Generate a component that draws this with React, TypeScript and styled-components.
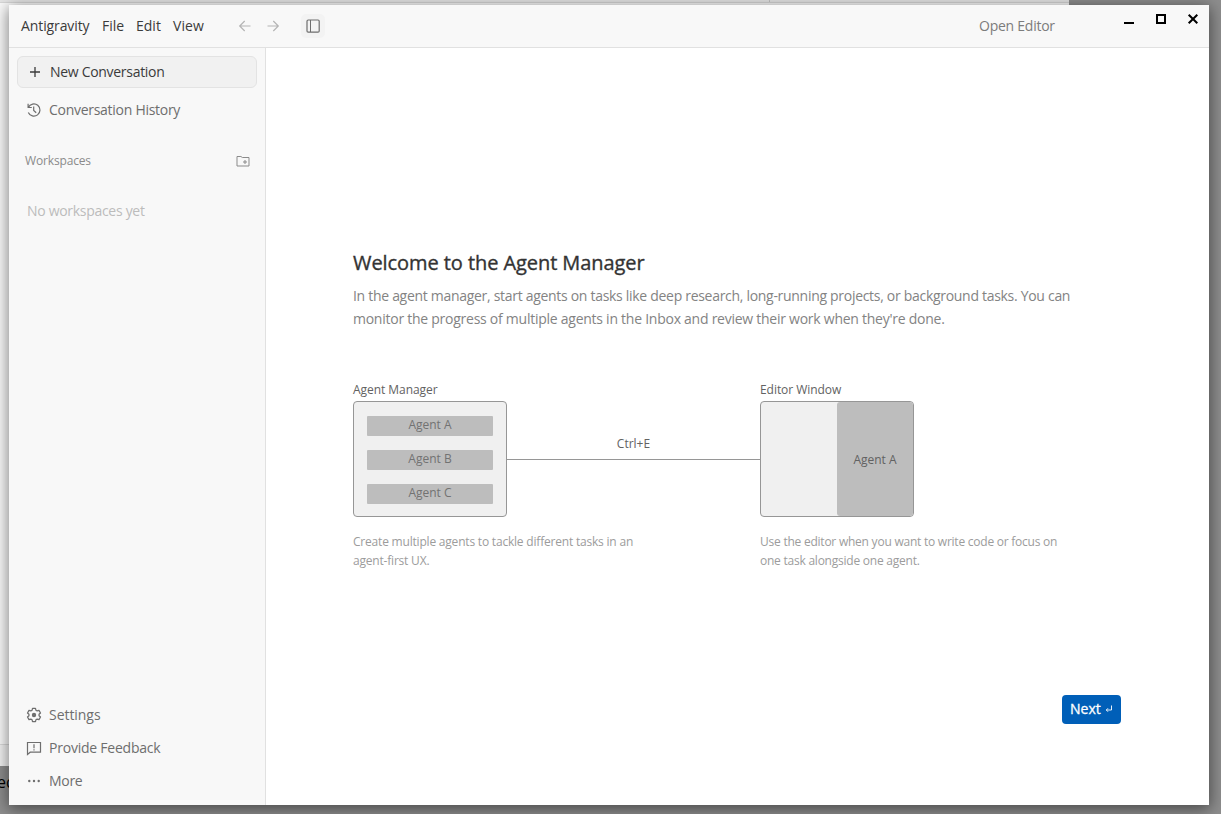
import React from "react";
import styled, { createGlobalStyle } from "styled-components";

const Global = createGlobalStyle`
  *, *::before, *::after { box-sizing: border-box; }
  body {
    margin: 0;
    overflow: hidden;
    font-family: "Open Sans", "Noto Sans", sans-serif;
    font-size: 14px;
  }
  button { font: inherit; letter-spacing: inherit; border: 0; padding: 0; background: none; color: inherit; }
`;

const Desktop = styled.div`
  position: relative;
  width: 1221px;
  height: 814px;
  overflow: hidden;
  background: #8e8e8e;
`;

const BackWindow = styled.div`
  width: 1069px;
  height: 766px;
  display: flex;
  flex-direction: column;
  background: #fbfbfb;
`;

const BackBar = styled.div`
  height: 3px;
  display: flex;
  background: #e6e6e6;
  border-bottom: 1px solid #d8d8d8;
`;

const BackTab = styled.div`
  width: 770px;
  border-right: 1px solid #c4c4c4;
`;

const BackBody = styled.div`
  flex: 1;
`;

const BackFooter = styled.div`
  height: 22px;
  border-top: 1px solid #dcdcdc;
  background: #f3f3f3;
`;

const BackText = styled.div`
  margin-top: 5px;
  margin-left: -3px;
  font: 16px/22px "Open Sans", sans-serif;
  color: #000;
`;

const AppWindow = styled.div`
  position: absolute;
  left: 9px;
  top: 5px;
  width: 1200px;
  height: 800px;
  display: flex;
  flex-direction: column;
  background: #fff;
  box-shadow: 0 3px 15px 1px rgba(0, 0, 0, 0.5);
`;

const TitleBar = styled.header`
  height: 43px;
  flex: none;
  display: flex;
  align-items: center;
  padding-left: 12px;
  background: #f8f8f8;
  border-bottom: 1px solid #e1e1e1;
`;

const Menu = styled.nav`
  display: flex;
  gap: 12px;
  padding-bottom: 2px;
  color: #3b3b3b;
`;

const MenuItem = styled.button<{ $w: number; $ls: number }>`
  width: ${(p) => p.$w}px;
  text-align: left;
  white-space: nowrap;
  letter-spacing: ${(p) => p.$ls}px;
`;

const NavButtons = styled.div`
  display: flex;
  align-items: center;
  gap: 12px;
  margin-left: 31.5px;
  color: #b4b4b4;
`;

const IconButton = styled.button<{ $size?: number; $bg?: string }>`
  width: ${(p) => p.$size ?? 16}px;
  height: ${(p) => p.$size ?? 16}px;
  display: flex;
  align-items: center;
  justify-content: center;
  border-radius: 5px;
  background: ${(p) => p.$bg ?? "transparent"};
`;

const PanelToggle = styled.div`
  margin-left: 20px;
  color: #6e6e6e;
`;

const OpenEditor = styled.button`
  margin-left: auto;
  padding-bottom: 2px;
  width: 77px;
  text-align: left;
  white-space: nowrap;
  color: #7c7c7c;
  letter-spacing: -0.25px;
`;

const WindowControls = styled.div`
  align-self: flex-start;
  display: flex;
  gap: 16px;
  margin: 6px 8px 0 65px;
  color: #000;
`;

const Body = styled.div`
  flex: 1;
  display: flex;
  min-height: 0;
`;

const Sidebar = styled.aside`
  width: 257px;
  flex: none;
  display: flex;
  flex-direction: column;
  padding: 8px;
  background: #f8f8f8;
  border-right: 1px solid #e1e1e1;
`;

const Label = styled.span<{ $ls?: number; $lift?: number }>`
  letter-spacing: ${(p) => p.$ls ?? -0.3}px;
  padding-bottom: ${(p) => p.$lift ?? 0}px;
`;

const NewButton = styled.button`
  height: 32px;
  display: flex;
  align-items: center;
  gap: 7px;
  padding-left: 9px;
  border: 1px solid #e3e3e3;
  border-radius: 6px;
  background: #f1f1f1;
  color: #3b3b3b;
`;

const SideItem = styled.button`
  height: 33px;
  display: flex;
  align-items: center;
  gap: 7px;
  padding-left: 9px;
  color: #6e6e6e;
`;

const History = styled.div`
  margin-top: 5px;
`;

const SectionHeader = styled.div`
  display: flex;
  align-items: center;
  justify-content: space-between;
  margin-top: 26px;
  height: 18px;
  padding: 0 6px 0 8px;
  font-size: 12px;
  color: #8b8b8b;
`;

const EmptyNote = styled.div`
  margin: 31px 0 0 10px;
  line-height: 20px;
  color: #bcbcbc;
  letter-spacing: -0.3px;
`;

const SideFooter = styled.div`
  margin-top: auto;
  display: flex;
  flex-direction: column;
`;

const Main = styled.main`
  flex: 1;
  display: flex;
  flex-direction: column;
  padding: 201px 88px 81px 87px;
`;

const Heading = styled.h1`
  margin: 0;
  font-size: 20px;
  line-height: 28px;
  font-weight: 500;
  letter-spacing: -0.07px;
  color: #333;
  -webkit-text-stroke: 0.35px #333;
`;

const Intro = styled.p`
  margin: 7px 0 0;
  line-height: 23px;
  color: #838383;
  white-space: nowrap;
`;

const Diagram = styled.section`
  display: flex;
  margin-top: 51px;
`;

const Card = styled.div<{ $w: number }>`
  width: ${(p) => p.$w}px;
  flex: none;
`;

const CardLabel = styled.div`
  height: 20px;
  line-height: 18px;
  font-size: 12px;
  letter-spacing: -0.05px;
  color: #626262;
`;

const Frame = styled.div`
  width: 154px;
  height: 116px;
  display: flex;
  border: 1px solid #969696;
  border-radius: 4px;
  background: #f0f0f0;
  overflow: hidden;
`;

const AgentList = styled.div`
  flex: 1;
  display: flex;
  flex-direction: column;
  gap: 14px;
  padding: 14px 13px 12px;
`;

const Agent = styled.div`
  flex: 1;
  line-height: 18px;
  border-radius: 1px;
  background: #bdbdbd;
  color: #727272;
  font-size: 12px;
  text-align: center;
`;

const AgentPane = styled.div`
  width: 76px;
  margin-left: auto;
  display: flex;
  align-items: center;
  justify-content: center;
  background: #bdbdbd;
  color: #626262;
  font-size: 12px;
  border-radius: 3px;
`;

const Caption = styled.p<{ $ls: number }>`
  margin: 15px 0 0;
  font-size: 12px;
  line-height: 19px;
  letter-spacing: ${(p) => p.$ls}px;
  color: #9c9c9c;
  white-space: nowrap;
`;

const Connector = styled.div`
  width: 253px;
  height: 79px;
  display: flex;
  align-items: center;
  flex-direction: column;
  justify-content: flex-end;
  border-bottom: 1px solid #969696;
  padding-bottom: 6px;
  font-size: 12px;
  line-height: 18px;
  color: #626262;
`;

const NextButton = styled.button`
  margin: auto 0 0 auto;
  width: 59px;
  height: 29px;
  display: flex;
  align-items: center;
  gap: 4px;
  padding: 0 0 2px 8px;
  border-radius: 4px;
  background: #005fb8;
  color: #fff;
  -webkit-text-stroke: 0.3px #fff;
`;

const Svg = ({ children, size = 16, sw = 1 }: { children: React.ReactNode; size?: number; sw?: number }) => (
  <svg width={size} height={size} viewBox="0 0 16 16" fill="none" stroke="currentColor" strokeWidth={sw}>
    {children}
  </svg>
);

const ArrowLeft = () => <Svg sw={1.2}><path d="M13.5 8H3M7.700 3 2.700 8l5 5" /></Svg>;
const ArrowRight = () => <Svg sw={1.2}><path d="M2.500 8H13M8.300 3l5 5-5 5" /></Svg>;
const PanelIcon = () => (
  <Svg><rect x="2" y="2" width="12.200" height="12.200" rx="1.200" strokeWidth="1.2" /><path d="M5.500 2v12" /></Svg>
);
const PlusIcon = () => <Svg sw={1.3}><path d="M8 3v10M3 8h10" /></Svg>;
const HistoryIcon = () => (
  <Svg sw={1.2}>
    <path d="M2.400 5.300A6.100 6.100 0 1 1 2.300 10.500M2.100 1.800v3.700h3.700" />
    <path d="M7.700 4.500v3.900l2.500 2.300" />
  </Svg>
);
const FolderIcon = () => (
  <Svg>
    <path d="M2 3.500h3.900l1.500 1h6.600v8.500H2z" />
    <path d="M10 7v4M8 9h4" />
  </Svg>
);
const GearIcon = () => (
  <Svg sw={1.25}>
    <path
      strokeLinejoin="round"
      d="M6.500 1.400h3l.45 1.900 1.150.65 1.900-.6 1.500 2.600-1.450 1.350v1.400l1.450 1.350-1.500 2.600-1.900-.6-1.150.65-.45 1.900h-3l-.45-1.900-1.150-.65-1.900.6-1.500-2.600 1.450-1.350V7.300L1.500 5.950 3 3.350l1.900.6 1.150-.65z"
    />
    <circle cx="8" cy="8" r="2.200" fill="currentColor" stroke="none" />
  </Svg>
);
const FeedbackIcon = () => (
  <Svg sw={1.200}>
    <path d="M1.500 2.500h13v9.700H4.200l-2.700 2.200z" />
    <path d="M8 4.300v3.900M8 9.200v1.300" />
  </Svg>
);
const MoreIcon = () => (
  <Svg>
    <g fill="currentColor" stroke="none">
      <circle cx="3.300" cy="8" r="1.200" /><circle cx="8" cy="8" r="1.200" /><circle cx="12.700" cy="8" r="1.200" />
    </g>
  </Svg>
);
const ReturnIcon = () => (
  <Svg size={8} sw={1.800}><path d="M13 1v9H3M6 6.500 2.500 10 6 13.500" /></Svg>
);
const MinimizeIcon = () => <Svg sw={2}><path d="M3 12h10" /></Svg>;
const MaximizeIcon = () => <Svg sw={2}><rect x="4" y="4" width="8" height="8" /></Svg>;
const CloseIcon = () => <Svg sw={2}><path d="m3.700 3.700 8.600 8.600M12.300 3.700l-8.600 8.600" /></Svg>;

export default function App() {
  return (
    <Desktop>
      <Global />
      <BackWindow>
        <BackBar><BackTab /></BackBar>
        <BackBody />
        <BackFooter />
      </BackWindow>
      <BackText>ed</BackText>

      <AppWindow>
        <TitleBar>
          <Menu>
            <MenuItem $w={69} $ls={-0.1}>Antigravity</MenuItem>
            <MenuItem $w={22} $ls={0}>File</MenuItem>
            <MenuItem $w={25} $ls={0}>Edit</MenuItem>
            <MenuItem $w={32} $ls={0.1}>View</MenuItem>
          </Menu>
          <NavButtons>
            <IconButton aria-label="Back"><ArrowLeft /></IconButton>
            <IconButton aria-label="Forward"><ArrowRight /></IconButton>
          </NavButtons>
          <PanelToggle>
            <IconButton $size={24} $bg="#f3f3f3" aria-label="Toggle sidebar"><PanelIcon /></IconButton>
          </PanelToggle>
          <OpenEditor>Open Editor</OpenEditor>
          <WindowControls>
            <IconButton aria-label="Minimize"><MinimizeIcon /></IconButton>
            <IconButton aria-label="Maximize"><MaximizeIcon /></IconButton>
            <IconButton aria-label="Close"><CloseIcon /></IconButton>
          </WindowControls>
        </TitleBar>

        <Body>
          <Sidebar>
            <NewButton><PlusIcon /><Label $lift={2}>New Conversation</Label></NewButton>
            <History>
              <SideItem><HistoryIcon /><Label $ls={-0.28}>Conversation History</Label></SideItem>
            </History>
            <SectionHeader><Label $ls={-0.15} $lift={2}>Workspaces</Label><FolderIcon /></SectionHeader>
            <EmptyNote>No workspaces yet</EmptyNote>
            <SideFooter>
              <SideItem><GearIcon /><Label $ls={-0.05}>Settings</Label></SideItem>
              <SideItem><FeedbackIcon /><Label $ls={-0.23}>Provide Feedback</Label></SideItem>
              <SideItem><MoreIcon /><Label>More</Label></SideItem>
            </SideFooter>
          </Sidebar>

          <Main>
            <Heading>Welcome to the Agent Manager</Heading>
            <Intro>
              <Label $ls={-0.297}>In the agent manager, start agents on tasks like deep research, long-running projects, or background tasks. You can</Label>
              <br />
              <Label $ls={-0.255}>monitor the progress of multiple agents in the Inbox and review their work when they're done.</Label>
            </Intro>
            <Diagram>
              <Card $w={154}>
                <CardLabel>Agent Manager</CardLabel>
                <Frame>
                  <AgentList>
                    <Agent>Agent A</Agent>
                    <Agent>Agent B</Agent>
                    <Agent>Agent C</Agent>
                  </AgentList>
                </Frame>
                <Caption $ls={-0.2}>Create multiple agents to tackle different tasks in an<br />agent-first UX.</Caption>
              </Card>
              <Connector>Ctrl+E</Connector>
              <Card $w={154}>
                <CardLabel>Editor Window</CardLabel>
                <Frame><AgentPane>Agent A</AgentPane></Frame>
                <Caption $ls={-0.235}>Use the editor when you want to write code or focus on<br />one task alongside one agent.</Caption>
              </Card>
            </Diagram>
            <NextButton>Next<ReturnIcon /></NextButton>
          </Main>
        </Body>
      </AppWindow>
    </Desktop>
  );
}
